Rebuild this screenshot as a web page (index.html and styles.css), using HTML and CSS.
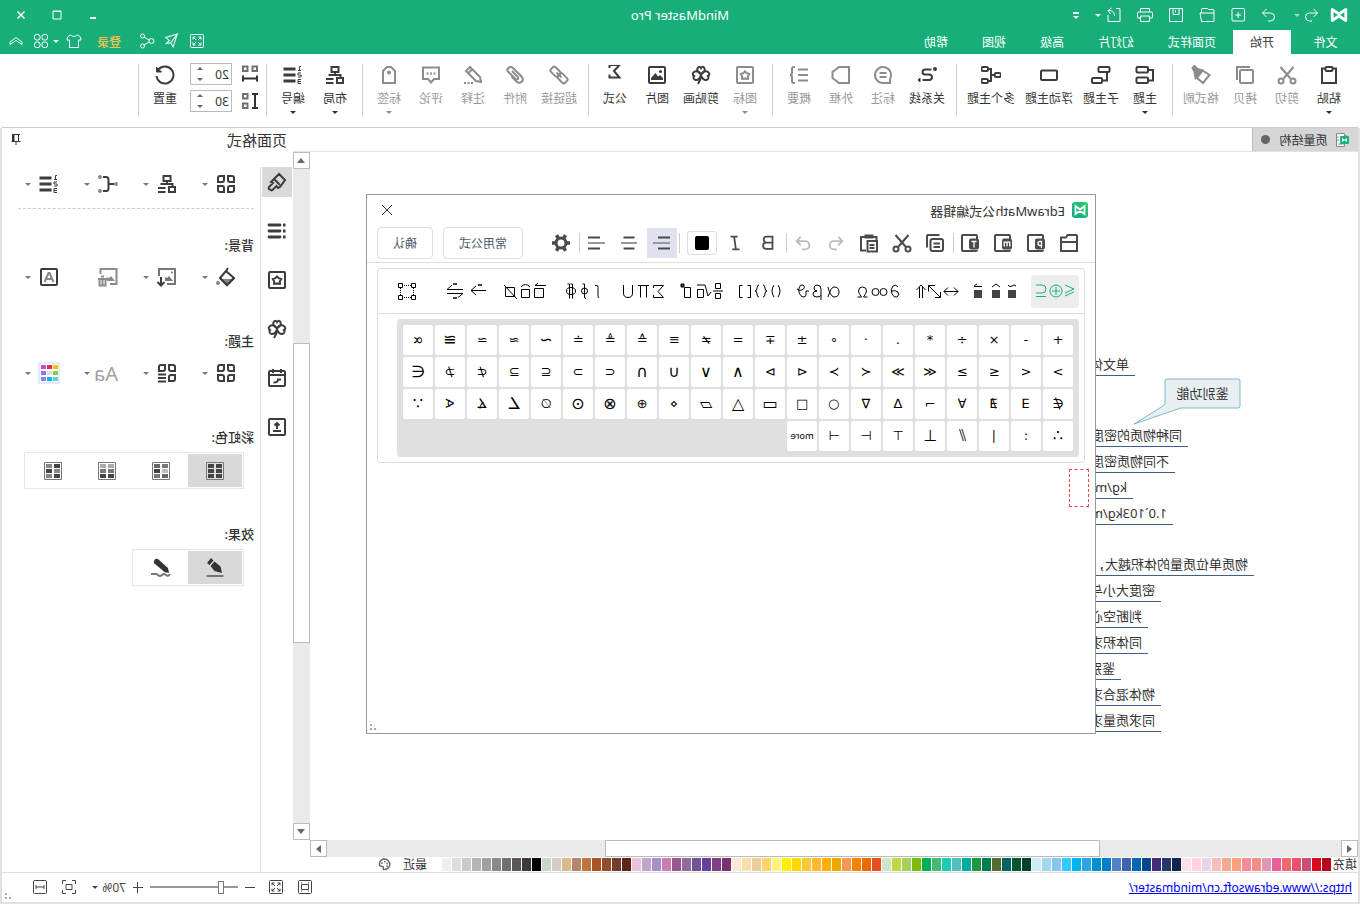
FILE: index.html
```html
<!DOCTYPE html>
<html lang="zh-CN">
<head>
<meta charset="utf-8">
<title>MindMaster Pro</title>
<link rel="stylesheet" href="styles.css">
</head>
<body>
<svg class="defs" aria-hidden="true">
  <symbol id="logo" viewBox="0 0 18 14"><path d="M2.200 1.500v11L9 8l6.800 4.500v-11L9 6z" fill="none" stroke="currentColor" stroke-width="2.800" stroke-linejoin="round"/></symbol>
  <symbol id="redo" viewBox="0 0 20 20"><path d="M3 8h9.500a4.500 4.500 0 0 1 0 9H9M7.500 3L3 8l4.500 4.500"/></symbol>
  <symbol id="undo" viewBox="0 0 20 20"><path d="M17 8H7.500a4.500 4.500 0 0 0 0 9H11M12.500 3L17 8l-4.500 4.500"/></symbol>
  <symbol id="back" viewBox="0 0 20 20"><path d="M4.500 8h8a4 4 0 0 1 0 8H10M8.500 4l-4 4 4 4"/></symbol>
  <symbol id="forth" viewBox="0 0 20 20"><path d="M15.500 8h-8a4 4 0 0 0 0 8H10M11.500 4l4 4-4 4"/></symbol>
  <symbol id="new" viewBox="0 0 20 20"><rect x="3.500" y="3.500" width="12.500" height="12.500" rx="1"/><path d="M9.800 7v6M6.800 10h6"/></symbol>
  <symbol id="open" viewBox="0 0 20 20"><path d="M3 8v7.500q0 1 1 1h11.500l1.500-8.500zM3 8V5.500q0-1 1-1h4.500l1-1h5q1 0 1 1V8"/></symbol>
  <symbol id="save" viewBox="0 0 20 20"><path d="M3.500 3.500h13v13h-13zM7 3.500v6h6v-6M10.500 5v2.500"/></symbol>
  <symbol id="print" viewBox="0 0 20 20"><path d="M5.500 7V3.500h9V7M5.500 13H3q-.5 0-.5-1V8q0-1 1-1h13q1 0 1 1v4q0 1-.5 1h-2.500M5.500 11h9v5.500h-9z"/></symbol>
  <symbol id="export" viewBox="0 0 20 20"><path d="M8 3.500H4v13h12V10M15.500 5.500C11 5 9.500 8 9.500 11M12.500 3l3.500 2.500-2.500 3.500"/></symbol>
  <symbol id="full" viewBox="0 0 20 20"><rect x="3.500" y="3.500" width="13" height="13" rx="1"/><path d="M6 8.500V6h2.500M11.500 6H14v2.500M14 11.500V14h-2.500M8.500 14H6v-2.500M6 6l3 3M14 6l-3 3M14 14l-3-3M6 14l3-3"/></symbol>
  <symbol id="plane" viewBox="0 0 20 20"><path d="M16 3.500L4 10l4.500 1.500L16 3.500l-1.500 12-3.500-3-2.500 3.500v-4.500" transform="rotate(-80 10 10)"/></symbol>
  <symbol id="share" viewBox="0 0 20 20"><circle cx="5.500" cy="10" r="2.500"/><circle cx="14.500" cy="5" r="2"/><circle cx="14.500" cy="15" r="2"/><path d="M8 9l5-3M8 11l5 3"/></symbol>
  <symbol id="shirt" viewBox="0 0 20 20"><path d="M7 4c1.500 2 4.500 2 6 0 2 0 4 2 4 5h-2.500v7.500h-9V9H3c0-3 2-5 4-5z"/></symbol>
  <symbol id="dots4" viewBox="0 0 20 20"><rect x="3.500" y="3.500" width="5.500" height="5.500" rx="2"/><rect x="11" y="3.500" width="5.500" height="5.500" rx="2"/><rect x="3.500" y="11" width="5.500" height="5.500" rx="2"/><rect x="11" y="11" width="5.500" height="5.500" rx="2"/></symbol>
  <symbol id="up2" viewBox="0 0 20 20"><path d="M4 11l6-4.500 6 4.500v2.500L10 9.500 4 13.500z"/></symbol>

  <symbol id="paste" viewBox="0 0 20 20"><path d="M6 3.500H3V18h14V3.500h-3"/><rect x="6.500" y="2" width="7" height="4" rx="1"/></symbol>
  <symbol id="cut" viewBox="0 0 20 20"><path d="M3.500 2l10 11.500M16.500 2l-10 11.500"/><circle cx="4" cy="16" r="2.500"/><circle cx="16" cy="16" r="2.500"/></symbol>
  <symbol id="copy" viewBox="0 0 20 20"><rect x="2" y="5" width="13" height="13" rx="1"/><path d="M5 2h13v13"/></symbol>
  <symbol id="brush" viewBox="0 0 20 20"><path d="M8.500 5.500L1.500 10l6.500 8 6-5z"/><path d="M8.500 5.500l5-1.500 3-3 2 2-2 3.500-1 6.500z" fill="currentColor"/></symbol>
  <symbol id="topic" viewBox="0 0 20 20"><rect x="7" y="2" width="11.500" height="5.500" rx="1"/><rect x="7" y="12.500" width="11.500" height="5.500" rx="1"/><path d="M7 5H2v10.500h5"/></symbol>
  <symbol id="sub" viewBox="0 0 20 20"><rect x="1.500" y="2" width="11" height="5" rx="1"/><rect x="9" y="13" width="10" height="5" rx="1"/><path d="M4 7v8.500h5"/></symbol>
  <symbol id="float" viewBox="0 0 20 20"><rect x="2" y="5.500" width="16" height="9.500" rx="1"/></symbol>
  <symbol id="multi" viewBox="0 0 20 20"><rect x="0" y="8" width="6.500" height="4" rx="2"/><path d="M6.500 10H10M13 4h-3v12h3"/><rect x="13" y="2" width="6.500" height="4" rx="1.500"/><rect x="13" y="14" width="6.500" height="4" rx="1.500"/></symbol>
  <symbol id="rel" viewBox="0 0 20 20"><path d="M14.500 4.500H8.500q-3 0-3 2.500t3 2.500H12q3 0 3 2.700T12 15H5.500" transform="matrix(-1 0 0 1 20 0)"/><circle cx="2" cy="4" r="1" fill="currentColor"/><path d="M17 13l2 2-2 2z" fill="currentColor" stroke-width="1"/></symbol>
  <symbol id="note" viewBox="0 0 20 20"><path d="M3 18v-4A8 8 0 1 1 10 18zM6.500 8h7M6.500 12h7"/></symbol>
  <symbol id="frame" viewBox="0 0 20 20"><path d="M2 2h10l6.500 5v6L12 18H2z"/></symbol>
  <symbol id="sum" viewBox="0 0 20 20"><path d="M1 4.500h10M1 10h10M1 15.500h10M14 2h1q2 0 2 2v3.500q0 2.500 2 2.500-2 0-2 2.500V16q0 2-2 2h-1"/></symbol>
  <symbol id="star" viewBox="0 0 20 20"><rect x="2" y="2" width="16" height="16" rx="1"/><path d="M10 6.500l1.700 1.700 2.500.8-1.300 2.200v2.600L10 13.500l-2.900.3v-2.600L5.800 9l2.500-.8z"/></symbol>
  <symbol id="clover" viewBox="0 0 20 20"><path d="M10 9.500C6 7 5.500 4 7 2.500q2-1.500 3 .5 1-2 3-.5C14.500 4 14 7 10 9.500zM10 10C9 6 4 5.500 2.500 7.500 1 9 2 10.500 3 11c-1 1-.5 3.500 1.500 4C7 15.500 9.500 13 10 10c.5 3 3 5.500 5.500 5 2-.5 2.500-3 1.500-4 1-.5 2-2 .5-3.500C16 5.500 11 6 10 10zM10 10q0 5 3 9"/></symbol>
  <symbol id="image" viewBox="0 0 20 20"><rect x="2" y="2" width="16" height="16" rx="1"/><path d="M4 15v-2l3-3 2 1.500L11.500 8l4.500 5v2z" fill="currentColor" stroke="none"/><circle cx="6.500" cy="6.500" r="1.500" fill="currentColor" stroke="none"/></symbol>
  <symbol id="sigma" viewBox="0 0 20 20"><path d="M15.500 3V0H5.500L11 6l-5.500 6.500h10V9.500"/></symbol>
  <symbol id="link" viewBox="0 0 20 20"><rect x="8.500" y="3.500" width="10" height="6.500" rx="2" transform="rotate(-45 13.500 6.700)"/><rect x="1.500" y="10" width="10" height="6.500" rx="2" transform="rotate(-45 6.500 13.300)"/><path d="M7.500 12.500l5-5"/></symbol>
  <symbol id="clip" viewBox="0 0 20 20"><path d="M13 6l-6 6q-1 3 2 2.500l8-8c2-3-2-6-5-3.500l-9 9c-2.500 4 2 7.500 5.500 4.500l5-5"/></symbol>
  <symbol id="pencil" viewBox="0 0 20 20"><path d="M2 17l1-5L13 2l4 4L7 16zM11 4.500l4 4"/><path d="M10 18h9" stroke-dasharray="2 1.500"/></symbol>
  <symbol id="comment" viewBox="0 0 20 20"><path d="M2 2.500h16V14h-5l-3 3.500L7 14H2z"/><path d="M5.500 8.500h9" stroke-dasharray="2 1.500"/></symbol>
  <symbol id="tag" viewBox="0 0 20 20"><path d="M4 18V6l4-4h4l4 4v12z"/><circle cx="10" cy="7.500" r="1" fill="currentColor"/></symbol>
  <symbol id="layout" viewBox="0 0 20 20"><rect x="6.500" y="2" width="7" height="5"/><path d="M10 7v3M4.500 13v-3h11v1M11.500 14H19M11.500 18H19"/><rect x="2" y="13" width="6" height="5"/></symbol>
  <symbol id="number" viewBox="0 0 20 20"><path d="M7.500 4h12M7.500 10h12M7.500 16h12" stroke-width="2.800"/><path d="M2 1.500h1.500v4M2 5.500h3M2 8h3v2H2v2h3M2 14.500h3v4H2M2 16.500h3" stroke-width="1"/></symbol>
  <symbol id="hgap" viewBox="0 0 20 20"><path d="M3 2.500h4.500V7H3zM12.500 2.500H17V7h-4.500z" stroke="#707070"/><path d="M3 11.500v6M17 11.500v6M2 14.500h16"/></symbol>
  <symbol id="vgap" viewBox="0 0 20 20"><path d="M12.500 3H17v4.500h-4.500zM12.500 12.500H17V17h-4.500z" stroke="#707070"/><path d="M2 3h6M2 17h6M5 3v14"/></symbol>
  <symbol id="reset" viewBox="0 0 20 20"><path d="M16.500 4.500A8.500 8.500 0 1 0 18.500 11" /><path d="M18.500 2v5h-5z" fill="currentColor" stroke-width="1"/></symbol>
  <symbol id="pin" viewBox="0 0 12 12"><path d="M2 1.500h8M3.500 1.500v7M9 1.500v7M1.500 8.500h9M6 9v3"/><path d="M7.500 1.500H10v7H7.500z" fill="currentColor" stroke="none"/></symbol>

  <symbol id="grid4" viewBox="0 0 20 20"><path d="M2 4q0-2 2-2h4v4q0 2-2 2H2zM12 2h4q2 0 2 2v4h-4q-2 0-2-2zM2 12h4q2 0 2 2v4H4q-2 0-2-2zM14 12h4v4q0 2-2 2h-4v-4q0-2 2-2z"/></symbol>
  <symbol id="grid3" viewBox="0 0 20 20"><path d="M2 4q0-2 2-2h4v4q0 2-2 2H2zM12 2h4q2 0 2 2v4h-4q-2 0-2-2zM2 12h4q2 0 2 2v4H4q-2 0-2-2zM11 11.500h8M11 15h8M11 18.500h8"/></symbol>
  <symbol id="branch" viewBox="0 0 20 20"><path d="M4 10h5M15 3h-3q-2.500 0-2.500 2.500v9Q9.500 17 12 17h3"/><g fill="#888" stroke="none"><circle cx="2" cy="10" r="2"/><circle cx="18" cy="3" r="2"/><circle cx="18" cy="17" r="2"/></g></symbol>
  <symbol id="bucket" viewBox="0 0 20 20"><path d="M8 1l2 3-8 7 7 7 7-7-6-7"/><path d="M3 12h12l-6 6z" fill="#888" stroke="none"/><path d="M2 11l7 7 7-7"/><circle cx="18" cy="16" r="2" fill="#888" stroke="none"/></symbol>
  <symbol id="picdown" viewBox="0 0 20 20"><path d="M10 17H2V2h16v7" stroke="#777"/><path d="M4 14l4-5 2 2 2-1v4z" fill="#777" stroke="none"/><circle cx="5" cy="5.500" r="1" fill="#777" stroke="none"/><path d="M16 10v8M12.500 15l3.500 3.500 3.500-3.500"/></symbol>
  <symbol id="picdel" viewBox="0 0 20 20"><path d="M8 17H1.500V2h16v5"/><path d="M3 14l4-5 2 2 2-1v4z" fill="currentColor" stroke="none"/><path d="M10.500 12H20M14 9.500h3M12.500 12v6.500h6V12M15.500 13v5"/></symbol>
  <symbol id="boxa" viewBox="0 0 20 20"><rect x="2" y="2" width="16" height="16" rx="1"/><path d="M5.500 15l4-9h1l4 9M7.500 12h5" stroke="#888"/></symbol>
  <symbol id="painter" viewBox="0 0 20 20"><path d="M2 8l6-6 8 8-2 1 4 4q1 2-1 2.500-1 1.500-2.500.500l-4-4-1.500 2-2-1zM7 13l6-6"/></symbol>
  <symbol id="list" viewBox="0 0 20 20"><path d="M7 4h11M7 10h11M7 16h11" stroke-width="2.800" stroke-linecap="round"/><path d="M1.500 4h2.500M1.500 10h2.500M1.500 16h2.500" stroke-width="2.800"/></symbol>
  <symbol id="cal" viewBox="0 0 20 20"><rect x="2" y="3" width="16" height="15" rx="1"/><path d="M2 7h16M6 1v4M14 1v4M6 11.500h3q0 3 4.500 3"/></symbol>
  <symbol id="upload" viewBox="0 0 20 20"><rect x="2" y="2" width="16" height="16" rx="1"/><path d="M10 12V6.500M7.500 8.500L10 6l2.500 2.500M6 14h8"/></symbol>
  <symbol id="pen" viewBox="0 0 20 20"><path d="M14 0l4 5-2.500 2-4-4.500zM10.500 3.500l4 4.500-4 5L3 15l1.500-6.500z" fill="currentColor" stroke="none"/><path d="M1.500 18h17" stroke="#777"/></symbol>
  <symbol id="scribble" viewBox="0 0 20 20"><path d="M12.500 1.500q2.500-1.500 4 .5 1.500 2 0 3.500L6.500 14 2 15l1-5z" fill="currentColor" stroke="none"/><path d="M1 16q2 3 4 1 2-2 4 0t4 0q2-2 3-1h4" stroke="#777"/></symbol>

  <symbol id="folder" viewBox="0 0 20 20"><path d="M2 9h16M2 18V3q0-1 1-1h8.500l1.500 2.500h5V18z"/></symbol>
  <symbol id="fp" viewBox="0 0 20 20"><path d="M3 6V3q0-1 1-1h13q1 0 1 1v14q0 1-1 1H4q-1 0-1-1"/><rect x="1" y="5.500" width="10" height="11" rx="2" fill="currentColor" stroke="none"/><path d="M4.500 15V8.500H6a1.800 1.800 0 0 1 0 4H4.500" stroke="#fff" stroke-width="1.300"/></symbol>
  <symbol id="fm" viewBox="0 0 20 20"><path d="M3 6V3q0-1 1-1h13q1 0 1 1v14q0 1-1 1H4q-1 0-1-1"/><rect x="1" y="5.500" width="10" height="11" rx="2" fill="currentColor" stroke="none"/><path d="M3.200 13.500V9.200h5.600v4.300M6 9.200v4.300" stroke="#fff" stroke-width="1.300"/></symbol>
  <symbol id="ft" viewBox="0 0 20 20"><path d="M3 6V3q0-1 1-1h13q1 0 1 1v14q0 1-1 1H4q-1 0-1-1"/><rect x="1" y="5.500" width="10" height="11" rx="2" fill="currentColor" stroke="none"/><path d="M3.500 8.500h5M6 8.500v6" stroke="#fff" stroke-width="1.300"/></symbol>
  <symbol id="copy2" viewBox="0 0 20 20"><rect x="2" y="6" width="12.500" height="12" rx="2"/><path d="M5.500 2H17q1 0 1 1v11.500M5 10.500h6.500M5 14h6.500"/></symbol>
  <symbol id="paste2" viewBox="0 0 20 20"><path d="M7 17.500H2V4h4M14 4h3.500v3M6.500 4.500V2.500h7v2z" transform="matrix(-1 0 0 1 20 0)"/><path d="M2 8h9.500v10.500H2zM4.500 12h5M4.500 15h5" fill="#fff"/></symbol>
  <symbol id="gear" viewBox="0 0 20 20"><circle cx="10" cy="10" r="5" stroke-width="3"/><path d="M16 10h3M4 10H1M13 4.800l1.500-2.600M7 4.800L5.500 2.200M13 15.200l1.500 2.600M7 15.200l-1.500 2.600" stroke-width="3.500"/></symbol>
  <symbol id="leftal" viewBox="0 0 20 20"><path d="M2 4.500h12M2 15.500h12"/><path d="M2 10h17" stroke="#999"/></symbol>
  <symbol id="midal" viewBox="0 0 20 20"><path d="M4.500 4.500h11M4.500 15.500h11"/><path d="M2 10h16" stroke="#999"/></symbol>
  <symbol id="rightal" viewBox="0 0 20 20"><path d="M6 4.500h12M6 15.500h12"/><path d="M1 10h17" stroke="#999"/></symbol>
  <symbol id="fit" viewBox="0 0 20 20"><rect x="3.500" y="3.500" width="13" height="13" rx="1"/><path d="M6.500 7.500h7v5h-7zM6 6h1M13 6h1M6 14h1M13 14h1"/></symbol>
  <symbol id="fitsel" viewBox="0 0 20 20"><path d="M3.500 7V3.500H7M13 3.500h3.500V7M16.500 13v3.500H13M7 16.500H3.500V13M7 7.500h6v5H7z"/></symbol>
  <symbol id="fitw" viewBox="0 0 20 20"><rect x="3.500" y="3.500" width="13" height="13" rx="1"/><path d="M6 10h8M6 8v4M14 8v4"/></symbol>
  <symbol id="palette" viewBox="0 0 14 14"><path d="M7 1.200a6 5.500 0 1 0 1 11.300c1-1-.5-2 .5-3s4 .5 4-3S9.500 1.200 7 1.200z" stroke-width="1.600"/><path d="M3.500 6h1.500M6 4h1.500M9 5.500h1.500M3.500 9H5" stroke-width="1.800"/></symbol>
</svg>

<div class="app">
  <header class="head">
    <div class="titlebar">
      <svg class="brand"><use href="#logo"/></svg>
      <div class="quick">
        <button class="tb" aria-label="撤销"><svg><use href="#back"/></svg></button><i class="caret faint"></i>
        <button class="tb" aria-label="恢复"><svg><use href="#forth"/></svg></button>
        <button class="tb" aria-label="新建"><svg><use href="#new"/></svg></button>
        <button class="tb" aria-label="打开"><svg><use href="#open"/></svg></button>
        <button class="tb" aria-label="保存"><svg><use href="#save"/></svg></button>
        <button class="tb" aria-label="打印"><svg><use href="#print"/></svg></button>
        <button class="tb" aria-label="导出"><svg><use href="#export"/></svg></button><i class="caret"></i>
        <button class="more-cmd" aria-label="更多"><i class="bar"></i><i class="caret"></i></button>
      </div>
      <h1>MindMaster Pro</h1>
      <div class="winbtns">
        <button aria-label="最小化"><svg viewBox="0 0 10 10"><path d="M2 8h6" stroke-width="2"/></svg></button>
        <button aria-label="最大化"><svg viewBox="0 0 10 10"><path d="M1 1h8v8H1zM1 1.500h8"/></svg></button>
        <button aria-label="关闭"><svg viewBox="0 0 10 10"><path d="M1.500 1.500l7 7M8.500 1.500l-7 7" stroke-width="1.500"/></svg></button>
      </div>
    </div>
    <nav class="tabs">
      <button class="file">文件</button><button class="on">开始</button><button>页面样式</button><button>幻灯片</button><button>高级</button><button>视图</button><button>帮助</button>
      <div class="tabtools">
        <button class="tb" aria-label="全屏"><svg><use href="#full"/></svg></button>
        <button class="tb" aria-label="发送"><svg><use href="#plane"/></svg></button>
        <button class="tb" aria-label="分享"><svg><use href="#share"/></svg></button>
        <button class="login">登录</button>
        <button class="tb" aria-label="皮肤"><svg><use href="#shirt"/></svg></button><i class="caret"></i>
        <button class="tb" aria-label="应用"><svg><use href="#dots4"/></svg></button>
        <button class="tb" aria-label="收起"><svg><use href="#up2"/></svg></button>
      </div>
    </nav>
  </header>

  <div class="ribbon">
    <button class="cmd"><svg><use href="#paste"/></svg>粘贴<i class="caret"></i></button>
    <button class="cmd off"><svg><use href="#cut"/></svg>剪切</button>
    <button class="cmd off"><svg><use href="#copy"/></svg>拷贝</button>
    <button class="cmd off"><svg><use href="#brush"/></svg>格式刷</button>
    <i class="sep"></i>
    <button class="cmd"><svg><use href="#topic"/></svg>主题<i class="caret"></i></button>
    <button class="cmd"><svg><use href="#sub"/></svg>子主题</button>
    <button class="cmd"><svg><use href="#float"/></svg>浮动主题</button>
    <button class="cmd"><svg><use href="#multi"/></svg>多个主题</button>
    <i class="sep"></i>
    <button class="cmd"><svg><use href="#rel"/></svg>关系线</button>
    <button class="cmd off"><svg><use href="#note"/></svg>标注</button>
    <button class="cmd off"><svg><use href="#frame"/></svg>外框</button>
    <button class="cmd off"><svg><use href="#sum"/></svg>概要</button>
    <i class="sep"></i>
    <button class="cmd off"><svg><use href="#star"/></svg>图标<i class="caret"></i></button>
    <button class="cmd"><svg><use href="#clover"/></svg>剪贴画</button>
    <button class="cmd"><svg><use href="#image"/></svg>图片</button>
    <button class="cmd"><svg><use href="#sigma"/></svg>公式</button>
    <i class="sep"></i>
    <button class="cmd off"><svg><use href="#link"/></svg>超链接</button>
    <button class="cmd off"><svg><use href="#clip"/></svg>附件</button>
    <button class="cmd off"><svg><use href="#pencil"/></svg>注释</button>
    <button class="cmd off"><svg><use href="#comment"/></svg>评论</button>
    <button class="cmd off"><svg><use href="#tag"/></svg>标签<i class="caret"></i></button>
    <i class="sep"></i>
    <button class="cmd"><svg><use href="#layout"/></svg>布局<i class="caret"></i></button>
    <button class="cmd"><svg><use href="#number"/></svg>编号<i class="caret"></i></button>
    <i class="sep"></i>
    <div class="gaps">
      <label><svg><use href="#hgap"/></svg><span class="num"><input aria-label="水平间距" value="20"><i class="spin"></i></span></label>
      <label><svg><use href="#vgap"/></svg><span class="num"><input aria-label="垂直间距" value="30"><i class="spin"></i></span></label>
    </div>
    <button class="cmd"><svg><use href="#reset"/></svg>重置</button>
    <i class="sep"></i>
  </div>

  <div class="body">
    <div class="work">
      <div class="docs">
        <button class="doc"><svg viewBox="0 0 16 16"><path d="M5.500 1.500h8v13h-8zM3.500 3.500h2M11 5h2M11 8h2M6 12h6" fill="#fff" stroke="#888"/><rect x="1" y="4" width="9" height="8" rx="1" fill="#12b47c"/><path d="M3 6v4l2.500-1.700L8 10V6L5.500 7.700z" fill="#fff"/></svg>质量结构<i class="dot"></i></button>
      </div>
      <div class="view">
        <main class="canvas">
          <span class="topic t1">单文体</span>
          <span class="topic t2">同种物质的密度</span>
          <span class="topic t3">不同物质密度</span>
          <span class="topic t4">kg/m</span>
          <span class="topic t5">1.0`103kg/m</span>
          <span class="topic t6">物质单位质量的体积越大，</span>
          <span class="topic t7">密度大小与</span>
          <span class="topic t8">判断空心</span>
          <span class="topic t9">同体积求</span>
          <span class="topic t10">鉴别</span>
          <span class="topic t11">物体混合求</span>
          <span class="topic t12">同求质量求</span>
          <div class="callout"><svg viewBox="0 0 108 48"><path d="M3 1h71q2 0 2 2v22q0 2 2 3l29 18L60 30H3q-2 0-2-2V3q0-2 2-2z" fill="#e8eff3" stroke="#7fb9cc"/></svg><span>鉴别功能</span></div>

          <section class="dialog">
            <div class="dtitle">
              <svg class="dlogo" viewBox="0 0 16 16"><defs><linearGradient id="lg" x1="0" y1="0" x2="1" y2="1"><stop stop-color="#2fd06a"/><stop offset="1" stop-color="#0ea88a"/></linearGradient></defs><rect width="16" height="16" rx="3" fill="url(#lg)"/><path d="M3.500 4v8L8 9l4.500 3V4L8 7.500z" fill="none" stroke="#fff" stroke-width="1.800"/></svg>
              <h2>EdrawMath公式编辑器</h2>
              <button class="x" aria-label="关闭"><svg viewBox="0 0 12 12"><path d="M1 1l10 10M11 1L1 11"/></svg></button>
            </div>
            <div class="dtools">
              <button class="ti"><svg><use href="#folder"/></svg></button>
              <button class="ti"><svg><use href="#fp"/></svg></button>
              <button class="ti"><svg><use href="#fm"/></svg></button>
              <button class="ti"><svg><use href="#ft"/></svg></button>
              <i class="vs"></i>
              <button class="ti"><svg><use href="#copy2"/></svg></button>
              <button class="ti"><svg><use href="#cut"/></svg></button>
              <button class="ti"><svg><use href="#paste2"/></svg></button>
              <button class="ti pale"><svg class="s"><use href="#redo"/></svg></button>
              <button class="ti pale"><svg class="s"><use href="#undo"/></svg></button>
              <i class="vs"></i>
              <button class="ti"><svg class="s" viewBox="0 0 20 20"><path d="M5 3h6.500a3 3 0 0 1 0 6.500H5zM5 9.500h7a3.500 3.500 0 0 1 0 7H5z"/></svg></button>
              <button class="ti"><svg class="s" viewBox="0 0 20 20"><path d="M7 3h8M5 17h8M11 3L9 17"/></svg></button>
              <button class="swatch"><i></i></button>
              <i class="vs"></i>
              <button class="ti on"><svg><use href="#leftal"/></svg></button>
              <button class="ti"><svg><use href="#midal"/></svg></button>
              <button class="ti"><svg><use href="#rightal"/></svg></button>
              <i class="vs"></i>
              <button class="ti"><svg><use href="#gear"/></svg></button>
              <button class="txt wide">常用公式</button>
              <button class="txt">确认</button>
            </div>
            <div class="sheet">
              <div class="cats">
                <button class="on"><svg viewBox="0 0 44 20"><path d="M12 4L3 8l9 4M3 11l9 4"/><circle cx="21" cy="10" r="6"/><path d="M21 6v8M17 10h8M41 4h-6q-4 0-4 4t4 4h6M31 15.500h10"/></svg></button>
                <button><svg viewBox="0 0 48 20"><path d="M4 9h8v8H4zM20 9h8v8h-8zM38 9h8v8h-8z" fill="#444" stroke="none"/><path d="M4 5q2-2 4 0t4-1M20 6l4-3 4 3M38 5.500h8M43 3l3 2"/></svg></button>
                <button><svg viewBox="0 0 48 20"><path d="M3 10.500h14M7 6.500l-4 4 4 4M13 6.500l4 4-4 4M32.500 4.500l-12 12M26 4.500h6.500v6M20.500 11v5.500H26M38.500 17V6M41.500 17V6M35.500 9L40 4l4.500 5"/></svg></button>
                <button><svg viewBox="0 0 48 20"><path d="M4 6q2-3 5-1 3 3 1 8-2 4-5 3-3-2-1-5 2-2 7-1"/><ellipse cx="18.500" cy="11" rx="3.500" ry="3.500"/><ellipse cx="26.500" cy="11" rx="3.500" ry="3.500"/><path d="M34.500 16h4q-3-4-3-6 0-4 4-4t4 4q0 2-3 6h4"/></svg></button>
                <button><svg viewBox="0 0 48 20"><path d="M15 6q-2 9-6 10-5 0-5-5t5-5q3 0 6 10M22 19V8q0-4 4-4 3 0 3 3t-3 3q4 0 4 3t-4 3-4-2M34 10h3v4q0 2 3 2 5-2 4-9-1-4-4-3-3 3 1 5 3 1 5-1"/></svg></button>
                <button><svg viewBox="0 0 48 20"><path d="M6 4q-4 6 0 12M10 4q4 6 0 12M21 4q-2 0-2 3 0 3-2 3 2 0 2 3 0 3 2 3M25 4q2 0 2 3 0 3 2 3-2 0-2 3 0 3-2 3M36.500 4.500h-3v12h3M41.500 4.500h3v12h-3"/></svg></button>
                <button><svg viewBox="0 0 48 20"><path d="M5.500 2.500h5v5h-5zM3 10h10M5.500 12.500h5v5h-5zM15 11l3 4 3-11h8M22.500 8.500h6v8h-6zM35.500 6.500h6v10h-6z"/><path d="M42 3h3v3h-3z" fill="#444"/></svg></button>
                <button><svg viewBox="0 0 48 20"><path d="M13.500 7V4.500h-10L9 10.500l-5.500 6h10V14M18 4.500h11M20.500 4.500v12M26.500 4.500v12M34.500 4v8q0 4.500 4.500 4.500t4.500-4.500V4"/></svg></button>
                <button><svg viewBox="0 0 48 20"><path d="M13 4.500h-2q-1 0-1 2v8q0 2-1 2.500M23.500 3v13q0 1.500-1.500 1.500M25.500 3h-2"/><ellipse cx="23.500" cy="10" rx="3" ry="3"/><path d="M35.500 17.500V3h2M38.500 17.500V3h2"/><ellipse cx="37" cy="10" rx="4.500" ry="3.500"/></svg></button>
                <button><svg viewBox="0 0 48 20"><path d="M5.500 7.500h9v9h-9zM3 4.500h11M11 2l3 2.500M19.500 8.500h8v8h-8zM19 6q4.500-5 9 0M34.500 6.500h9v9h-9zM45 4L32 18"/></svg></button>
                <button><svg viewBox="0 0 48 20"><path d="M4 9.500h15M14 5l5 4.500-5 4.500M27 8.500h16M38 4l5 4.500M43 12.500H27M27 12.500l5 4"/><path d="M8 4h4M33 3h4M33 17h4" stroke="#444" stroke-width="2"/></svg></button>
                <button><svg viewBox="0 0 48 20"><path d="M15.500 2.500h4v4h-4zM28.500 2.500h4v4h-4zM15.500 14.500h4v4h-4zM28.500 14.500h4v4h-4z"/><path d="M20 4.500h8M20 16.500h8M17.500 7v7M30.500 7v7" stroke-dasharray="1 1"/></svg></button>
              </div>
              <div class="keys">
                <button>+</button><button>-</button><button>×</button><button>÷</button><button>*</button><button>.</button><button>·</button><button>∘</button><button>±</button><button>∓</button><button>=</button><button>≠</button><button>≡</button><button>≙</button><button>≜</button><button>≐</button><button class="big">∼</button><button>≈</button><button>≃</button><button class="big">≅</button><button class="big">∝</button>
                <button>&gt;</button><button>&lt;</button><button>≤</button><button>≥</button><button>≪</button><button>≫</button><button>≺</button><button>≻</button><button>⊲</button><button>⊳</button><button class="big">∧</button><button class="big">∨</button><button class="big">∪</button><button class="big">∩</button><button>⊂</button><button>⊃</button><button>⊆</button><button>⊇</button><button>⊄</button><button>⊅</button><button class="big">∈</button>
                <button>∉</button><button>∃</button><button>∄</button><button>∀</button><button>¬</button><button>∆</button><button>∇</button><button>○</button><button>□</button><button class="big">▭</button><button class="big">△</button><button class="big">▱</button><button>⋄</button><button>⊕</button><button class="big">⊗</button><button class="big">⊙</button><button>∅</button><button class="big">∠</button><button>∡</button><button>∢</button><button class="big">∵</button>
                <button class="big">∴</button><button>:</button><button>∣</button><button class="big">⫽</button><button class="big">⊥</button><button>⊤</button><button>⊢</button><button>⊣</button><button class="word">more</button>
              </div>
            </div>
            <div class="formula"><i class="slot"></i></div>
            <i class="grip"></i>
          </section>
        </main>
        <div class="vscroll"><i class="end"><b class="au"></b></i><i class="thumb"></i><i class="end"><b class="ad"></b></i></div>
      </div>
      <div class="hscroll"><i class="end"><b class="al"></b></i><i class="thumb"></i><i class="end"><b class="ar"></b></i></div>
      <div class="colors"><span>填充</span><div class="sw"><i style="background:#b50a1b"></i><i style="background:#d60a20"></i><i style="background:#c95075"></i><i style="background:#e85367"></i><i style="background:#ec6a70"></i><i style="background:#e75f9b"></i><i style="background:#e096b5"></i><i style="background:#f08f85"></i><i style="background:#f08d99"></i><i style="background:#ffa07a"></i><i style="background:#f0aa94"></i><i style="background:#f7bcbc"></i><i style="background:#ecd3e8"></i><i style="background:#fed4e4"></i><i style="background:#fde0e6"></i><i style="background:#13234f"></i><i style="background:#24386f"></i><i style="background:#432c78"></i><i style="background:#084790"></i><i style="background:#0068ab"></i><i style="background:#3e62ae"></i><i style="background:#5281c4"></i><i style="background:#007ecb"></i><i style="background:#008fcf"></i><i style="background:#2ba6e0"></i><i style="background:#00b4f0"></i><i style="background:#2fcbff"></i><i style="background:#8cc3ec"></i><i style="background:#9fd8ef"></i><i style="background:#d0ebf7"></i><i style="background:#00412f"></i><i style="background:#00582f"></i><i style="background:#006560"></i><i style="background:#576a30"></i><i style="background:#007c4b"></i><i style="background:#1f9640"></i><i style="background:#00ae9e"></i><i style="background:#50bec2"></i><i style="background:#1bceb2"></i><i style="background:#46b77a"></i><i style="background:#00af50"></i><i style="background:#7fba0f"></i><i style="background:#a5cf61"></i><i style="background:#c0d842"></i><i style="background:#cce8c8"></i><i style="background:#e55020"></i><i style="background:#ee6a00"></i><i style="background:#f08300"></i><i style="background:#f39a52"></i><i style="background:#f2a600"></i><i style="background:#ffb000"></i><i style="background:#ffb833"></i><i style="background:#f9c933"></i><i style="background:#ffd900"></i><i style="background:#fff000"></i><i style="background:#fdf282"></i><i style="background:#ffd470"></i><i style="background:#eacd98"></i><i style="background:#ffdcaa"></i><i style="background:#fde9d0"></i><i style="background:#7b3070"></i><i style="background:#803f80"></i><i style="background:#66409a"></i><i style="background:#735296"></i><i style="background:#97679f"></i><i style="background:#99588a"></i><i style="background:#cd7eb0"></i><i style="background:#a890cf"></i><i style="background:#c4a4c8"></i><i style="background:#ebc1dc"></i><i style="background:#5c2819"></i><i style="background:#773c30"></i><i style="background:#934d2a"></i><i style="background:#a95426"></i><i style="background:#c0743f"></i><i style="background:#b4866c"></i><i style="background:#deb887"></i><i style="background:#d5cbc6"></i><i style="background:#cbd3cb"></i><i style="background:#000"></i><i style="background:#3f3837"></i><i style="background:#595757"></i><i style="background:#717071"></i><i style="background:#898989"></i><i style="background:#9fa0a0"></i><i style="background:#b5b5b6"></i><i style="background:#c9caca"></i><i style="background:#dcdddd"></i><i style="background:#efefef"></i></div><span class="recent">最近</span><svg><use href="#palette"/></svg></div>
    </div>

    <aside class="panel">
      <div class="ptitle"><h2>页面格式</h2><button aria-label="固定"><svg><use href="#pin"/></svg></button></div>
      <div class="pbody">
        <div class="strip">
          <button class="on"><svg><use href="#painter"/></svg></button>
          <button><svg><use href="#list"/></svg></button>
          <button><svg><use href="#star"/></svg></button>
          <button><svg><use href="#clover"/></svg></button>
          <button><svg><use href="#cal"/></svg></button>
          <button><svg><use href="#upload"/></svg></button>
        </div>
        <div class="opts">
          <div class="row first">
            <button><svg><use href="#grid4"/></svg><i class="caret"></i></button>
            <button><svg><use href="#layout"/></svg><i class="caret"></i></button>
            <button><svg><use href="#branch"/></svg><i class="caret"></i></button>
            <button><svg><use href="#number"/></svg><i class="caret"></i></button>
          </div>
          <h3>背景:</h3>
          <div class="row">
            <button><svg><use href="#bucket"/></svg><i class="caret"></i></button>
            <button><svg><use href="#picdown"/></svg><i class="caret"></i></button>
            <button class="off"><svg><use href="#picdel"/></svg></button>
            <button><svg><use href="#boxa"/></svg><i class="caret"></i></button>
          </div>
          <h3>主题:</h3>
          <div class="row">
            <button><svg><use href="#grid4"/></svg><i class="caret"></i></button>
            <button><svg><use href="#grid3"/></svg><i class="caret"></i></button>
            <button class="off"><span class="aa">Aa</span><i class="caret"></i></button>
            <button><svg viewBox="0 0 20 20"><path d="M0 0h20v20H0z" fill="#fff" stroke="#cdd5ee" stroke-width="1"/><g stroke="none"><path d="M1 2h5v4H1z" fill="#efc100"/><path d="M7 2h5v4H7z" fill="#dc2d52"/><path d="M13 2h5v4h-5z" fill="#c04fc8"/><path d="M1 8h5v4H1z" fill="#7bd148"/><path d="M7 8h5v4H7z" fill="#ddd"/><path d="M13 8h5v4h-5z" fill="#9a6ff0"/><path d="M1 14h5v4H1z" fill="#66cfdc"/><path d="M7 14h5v4H7z" fill="#00b7f5"/><path d="M13 14h5v4h-5z" fill="#7f88f7"/></g></svg><i class="caret"></i></button>
          </div>
          <h3>彩虹色:</h3>
          <div class="seg">
            <button class="on"><svg viewBox="0 0 18 18"><path d="M.5.500h17v17H.500z" fill="#ddd" stroke="#777" stroke-width="1"/><path d="M2 2h6v4H2zM10 2h6v4h-6zM2 7h6v4H2zM10 7h6v4h-6zM2 12h6v4H2zM10 12h6v4h-6z" stroke="none" fill="#444"/></svg></button>
            <button><svg viewBox="0 0 18 18"><path d="M.5.500h17v17H.500z" fill="#fff" stroke="#777" stroke-width="1"/><g stroke="none"><path d="M10 7h6v4h-6z" fill="#444"/><path d="M2 2h6v4H2zM10 12h6v4h-6z" fill="#777"/><path d="M10 2h6v4h-6zM2 12h6v4H2z" fill="#666"/><path d="M2 7h6v4H2z" fill="#bbb"/></g></svg></button>
            <button><svg viewBox="0 0 18 18"><path d="M.5.500h17v17H.500z" fill="#fff" stroke="#777" stroke-width="1"/><g stroke="none"><path d="M2 2h6v4H2zM10 2h6v4h-6z" fill="#aaa"/><path d="M2 7h6v4H2zM10 7h6v4h-6z" fill="#777"/><path d="M2 12h6v4H2zM10 12h6v4h-6z" fill="#444"/></g></svg></button>
            <button><svg viewBox="0 0 18 18"><path d="M.5.500h17v17H.500z" fill="#fff" stroke="#777" stroke-width="1"/><g stroke="none"><path d="M2 2h6v4H2zM10 7h6v4h-6zM2 12h6v4H2z" fill="#444"/><path d="M10 2h6v4h-6zM2 7h6v4H2zM10 12h6v4h-6z" fill="#888"/></g></svg></button>
          </div>
          <h3>效果:</h3>
          <div class="seg">
            <button class="on"><svg class="l"><use href="#pen"/></svg></button>
            <button><svg class="l"><use href="#scribble"/></svg></button>
          </div>
        </div>
      </div>
    </aside>
  </div>

  <footer class="status">
    <a href="https://www.edrawsoft.cn/mindmaster/">https://www.edrawsoft.cn/mindmaster/</a>
    <div class="zoombar">
      <button class="tb" aria-label="适合页面"><svg><use href="#fit"/></svg></button>
      <button class="tb" aria-label="全屏"><svg><use href="#full"/></svg></button>
      <button class="pm" aria-label="缩小"><svg viewBox="0 0 12 12"><path d="M1 6.500h10"/></svg></button>
      <input type="range" aria-label="缩放" min="0" max="100" value="17">
      <button class="pm" aria-label="放大"><svg viewBox="0 0 12 12"><path d="M1 6.500h10M6.500 1v11"/></svg></button>
      <button class="pct">70%<i class="caret"></i></button>
      <button class="tb" aria-label="适合选区"><svg><use href="#fitsel"/></svg></button>
      <button class="tb" aria-label="适合宽度"><svg><use href="#fitw"/></svg></button>
    </div>
    <i class="grip"></i>
  </footer>
</div>
</body>
</html>
```
FILE: styles.css
```css
* { box-sizing: border-box; }
body { margin: 0; font-family: "Noto Sans", "Noto Sans CJK SC", sans-serif; font-size: 12px; color: #333; background: #fff; overflow: hidden; }
button { border: 0; background: none; padding: 0; margin: 0; font: inherit; color: inherit; display: flex; align-items: center; justify-content: center; }
h1, h2, h3 { margin: 0; font-weight: 400; font-size: 13px; }
i { font-style: normal; }
svg { width: 20px; height: 20px; display: block; flex: none; fill: none; stroke: currentColor; stroke-width: 2; overflow: visible; }
.defs { position: absolute; width: 0; height: 0; }

/* the whole window is shown mirrored left to right */
.app { height: 100vh; display: flex; flex-direction: column; transform: scaleX(-1); background: #fff; }

.caret { width: 0; height: 0; border: 3px solid transparent; border-top-color: currentColor; border-bottom: 0; flex: none; }

/* header */
.head { background: #17ae79; color: #fff; }
.head svg { stroke-width: 1; }
.titlebar { height: 30px; display: grid; grid-template-columns: auto 1fr auto; align-items: center; padding-left: 12px; position: relative; }
.brand { width: 18px; height: 14px; }
.quick { display: flex; align-items: center; padding-left: 4px; }
.tb { width: 31px; height: 20px; }
.quick .tb:first-child { width: 28px; }
.quick .tb:nth-child(3) { width: 29px; margin-left: 10px; }
.quick .tb + .caret { margin: 0 1px 0 -2px; }
.quick .faint { opacity: .6; }
.quick .more-cmd { flex-direction: column; gap: 2px; width: 36px; }
.more-cmd .bar { width: 6px; height: 2px; background: #fff; }
.titlebar h1 { position: absolute; left: 0; right: 0; text-align: center; pointer-events: none; line-height: 30px; }
.winbtns { display: flex; grid-column: 3; padding-right: 3px; }
.winbtns button { width: 36px; height: 28px; }
.winbtns svg { width: 10px; height: 10px; stroke-width: 1; }
.tabs { height: 24px; display: flex; }
.tabs > button { padding: 0 17px; height: 24px; }
.tabs > .file { width: 69px; }
.tabs > .on { background: #fff; color: #333; }
.tabtools { margin-left: auto; display: flex; align-items: center; padding: 0 4px 2px 0; }
.tabtools .tb { width: 25px; }
.tabtools .caret { margin: 0 -1px 0 3px; }
.tabtools .login { color: #f6c24d; padding: 2px 10px 0 13px; font-weight: 500; }

/* ribbon */
.ribbon { display: flex; align-items: flex-start; height: 74px; padding: 10px 8px 0; margin: 0 2px; border-bottom: 1px solid #ccc; }
.cmd { flex-direction: column; min-width: 42px; padding: 1px 5px 0; line-height: 16px; white-space: nowrap; justify-content: flex-start; }
.cmd svg { margin-bottom: 6px; color: #3c3c3c; }
.cmd .caret { margin-top: 4px; }
.off { color: #999; }
.off svg, .off .caret { color: #8c8c8c; }
.sep { width: 1px; height: 53px; margin: 0 6px 0 5px; background: #d0d0d0; flex: none; }
.gaps { display: flex; flex-direction: column; gap: 5px; margin: -1px 4px 0 0; }
.gaps label { display: flex; align-items: center; gap: 8px; }
.num { width: 42px; height: 22px; border: 1px solid #bbb; display: flex; align-items: center; }
.num input { width: 28px; border: 0; padding: 0 0 0 2px; font: inherit; color: #333; background: none; outline: 0; }
.spin { width: 6px; height: 14px; display: flex; flex-direction: column; justify-content: space-between; color: #666; }
.spin::before, .spin::after { content: ""; border: 3px solid transparent; }
.spin::before { border-top: 0; border-bottom-color: currentColor; }
.spin::after { border-bottom: 0; border-top-color: currentColor; }

/* main area */
.body { flex: 1; min-height: 0; display: flex; border: solid #e0e0e0; border-width: 0 2px; }
.work { flex: 1; min-width: 0; display: flex; flex-direction: column; }
.docs { height: 24px; border-bottom: 1px solid #e3e3e3; display: flex; }
.doc { width: 106px; background: #d6d6d6; border-right: 1px solid #bbb; gap: 6px; }
.doc svg { width: 16px; height: 16px; stroke-width: 1; stroke: none; }
.dot { width: 9px; height: 9px; border-radius: 50%; background: #666; margin-left: 3px; }
.view { flex: 1; min-height: 0; display: flex; }
.canvas { flex: 1; position: relative; overflow: hidden; }
.topic { position: absolute; border-bottom: 1px solid #3d5f88; padding: 0 0 2px 6px; font-size: 13px; line-height: 18px; min-width: 200px; white-space: nowrap; }
.t1 { left: 223px; top: 203px; }
.t2 { left: 170px; top: 274px; }
.t3 { left: 183px; top: 300px; }
.t4 { left: 225px; top: 326px; }
.t5 { left: 185px; top: 352px; }
.t6 { left: 104px; top: 403px; }
.t7 { left: 197px; top: 429px; }
.t8 { left: 210px; top: 455px; }
.t9 { left: 210px; top: 481px; }
.t10 { left: 237px; top: 507px; }
.t11 { left: 197px; top: 533px; }
.t12 { left: 197px; top: 559px; }
.callout { position: absolute; left: 117px; top: 226px; width: 108px; height: 48px; }
.callout svg { width: 108px; height: 48px; stroke-width: 1; }
.callout span { position: absolute; left: 0; top: 0; width: 77px; text-align: center; line-height: 30px; font-size: 13px; }

/* formula editor window */
.dialog { position: absolute; left: 262px; top: 42px; width: 730px; height: 540px; background: #fff; border: 1px solid #999; display: flex; flex-direction: column; }
.dtitle { display: flex; align-items: center; height: 30px; padding: 0 14px 0 7px; gap: 7px; }
.dlogo { width: 16px; height: 16px; stroke: none; }
.x { margin-left: auto; }
.x svg { width: 12px; height: 12px; stroke-width: 1; }
.dtools { display: flex; align-items: center; height: 38px; border-bottom: 1px solid #ddd; padding: 0 10px 2px 11px; color: #4a4a4a; }
.ti { width: 30px; height: 30px; margin-right: 3px; }
.pale { color: #bbb; }
.ti .s { width: 18px; height: 18px; }
.vs { width: 1px; height: 20px; background: #ccc; margin-right: 3px; flex: none; }
.dtools .ti + .vs { margin-left: -2px; }
.dtools .on { background: #dfe1ee; margin-left: -1px; }
.swatch { width: 30px; height: 24px; border: 1px solid #ddd; border-radius: 3px; margin: 0 7px 0 0; }
.swatch i { width: 14px; height: 14px; background: #000; border-radius: 2px; }
.txt { width: 56px; height: 32px; border: 1px solid #ddd; border-radius: 4px; color: #4b5870; }
.wide { width: 80px; margin: 0 10px 0 auto; }
.sheet { margin: 5px 10px 0; border: 1px solid #ddd; border-radius: 3px; }
.cats { display: flex; justify-content: space-between; height: 45px; align-items: center; padding: 0 5px; border-bottom: 1px solid #ddd; }
.cats button { width: 48px; height: 33px; border-radius: 4px; color: #000; }
.cats button.on { background: #ededed; color: #12b47c; }
.cats svg { width: 48px; height: 20px; stroke-width: 1; }
.cats .on svg { width: 44px; }
.keys { display: grid; grid-template-columns: repeat(21, 30px); gap: 2px; background: #e0e0e0; border-radius: 4px; padding: 6px; margin: 5px 19px 5px 5px; }
.keys button { height: 30px; background: #fff; border-radius: 2px; color: #000; font-family: "DejaVu Sans", sans-serif; font-size: 13px; line-height: 16px; }
.keys .big { font-size: 16px; }
.keys .word { font-size: 9px; }
.formula { flex: 1; padding: 6px; }
.slot { display: block; width: 20px; height: 38px; border: 1px dashed #f04848; }
.grip { position: absolute; right: 2px; bottom: 2px; width: 11px; height: 11px; background: radial-gradient(circle at 1px 1px, #aaa 1px, transparent 1px) 0 0 / 4px 4px; clip-path: polygon(100% 0, 100% 100%, 0 100%); }

/* scroll bars */
.vscroll { width: 17px; background: #eaeaea; display: flex; flex-direction: column; }
.end { width: 17px; height: 17px; border: 1px solid #bbb; background: #fff; display: flex; align-items: center; justify-content: center; flex: none; }
.end b { border: 4px solid transparent; }
.end .au { border-top: 0; border-bottom: 5px solid #666; }
.end .ad { border-bottom: 0; border-top: 5px solid #666; }
.end .al { border-left: 0; border-right: 5px solid #666; }
.end .ar { border-right: 0; border-left: 5px solid #666; }
.thumb { background: #fff; border: 1px solid #bbb; }
.vscroll .thumb { height: 300px; margin: 174px 0 auto; }
.hscroll { height: 17px; background: #eaeaea; display: flex; margin-right: 17px; }
.hscroll .thumb { width: 495px; margin: 0 auto 0 241px; }
.colors { display: flex; align-items: center; height: 15px; line-height: 14px; }
.colors span { width: 26px; white-space: nowrap; margin-left: 1px; }
.sw { display: flex; gap: 1px; }
.sw i { width: 9px; height: 13px; }
.colors .recent { margin: 0 10px 0 15px; }
.colors svg { width: 13px; height: 13px; stroke-width: 1; color: #666; }

/* format panel */
.panel { width: 291px; display: flex; flex-direction: column; }
.ptitle { height: 24px; display: flex; align-items: center; justify-content: space-between; padding: 0 8px 2px 6px; }
.ptitle h2 { font-size: 15px; }
.ptitle svg { width: 12px; height: 12px; stroke-width: 1; color: #333; }
.pbody { flex: 1; display: flex; margin-top: 15px; }
.strip { width: 33px; padding-left: 1px; border-right: 1px solid #ddd; display: flex; flex-direction: column; gap: 19px; color: #3c3c3c; }
.strip button { width: 30px; height: 30px; }
.strip .on { background: #d9d9d9; }
.opts { flex: 1; padding: 2px 16px 0 6px; }
.row { display: flex; color: #3c3c3c; height: 32px; }
.row button { width: 59px; padding-left: 18px; justify-content: flex-start; gap: 8px; }
.row .caret { color: #777; }
.row.first { height: 40px; border-bottom: 1px dashed #ccc; padding-bottom: 9px; margin-bottom: 26px; }
.opts h3 { font-weight: 500; line-height: 20px; margin-bottom: 6px; }
.row + h3 { margin-top: 38px; }
.row.first + h3 { margin-top: 0; }
.row .off { color: #a0a0a0; }
.aa { font-size: 20px; width: 23px; margin-right: -3px; }
.seg { display: flex; width: fit-content; margin: -1px 0 35px 10px; border: 1px solid #e6e6e6; padding: 1px; }
.seg button { width: 54px; height: 33px; }
.seg .on { background: #d9d9d9; }
.seg svg { width: 18px; height: 18px; }
.seg .l { width: 20px; height: 20px; }

/* status bar */
.status { position: relative; height: 32px; flex: none; display: flex; align-items: center; justify-content: space-between; border: 2px solid #e0e0e0; border-top: 1px solid #ddd; padding: 0 24px 1px 6px; }
.status a { color: #00e; }
.zoombar { display: flex; align-items: center; color: #444; }
.zoombar svg { stroke-width: 1; }
.zoombar .tb { width: 29px; }
.pm { width: 24px; height: 20px; }
.pm svg { width: 12px; height: 12px; }
.zoombar input { width: 88px; height: 16px; margin: 0; appearance: none; background: linear-gradient(#999, #999) center / 100% 2px no-repeat; }
.zoombar input::-webkit-slider-thumb { appearance: none; width: 6px; height: 13px; background: #fff; border: 1px solid #777; }
.pct { gap: 4px; width: 42px; justify-content: flex-start; }
```
